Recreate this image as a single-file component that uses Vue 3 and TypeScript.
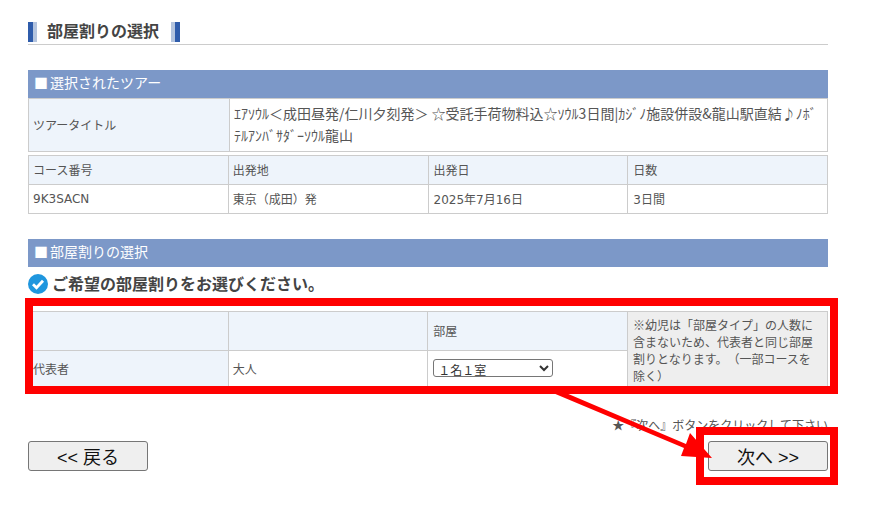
<script setup lang="ts">
const courseHead: string[] = ['コース番号', '出発地', '出発日', '日数']
const courseBody: string[] = ['9K3SACN', '東京\uFF08成田\uFF09発', '2025年7月16日', '3日間']
const note: string = '※幼児は「部屋タイプ」の人数に含まないため、代表者と同じ部屋割りとなります。\uFF08一部コースを除く\uFF09'
const roomOption: string = '\uFF11名\uFF11室'
</script>

<template>
  <div class="page">
    <h2 class="title">
      <span class="bar bar-left"></span>
      <span class="title-text">部屋割りの選択</span>
      <span class="bar bar-right"></span>
    </h2>

    <div class="section first">■<span>選択されたツアー</span></div>
    <table class="tbl tour">
      <tbody>
        <tr>
          <th class="w200">ツアータイトル</th>
          <td class="tour-title">ｴｱｿｳﾙ＜成田昼発/仁川夕刻発＞ ☆受託手荷物料込☆ｿｳﾙ3日間|ｶｼﾞﾉ施設併設&amp;龍山駅直結♪ﾉﾎﾞﾃﾙｱﾝﾊﾞｻﾀﾞｰｿｳﾙ龍山</td>
        </tr>
      </tbody>
    </table>
    <table class="tbl course">
      <tbody>
        <tr><th v-for="h in courseHead" :key="h">{{ h }}</th></tr>
        <tr><td v-for="c in courseBody" :key="c">{{ c }}</td></tr>
      </tbody>
    </table>

    <div class="section second">■<span>部屋割りの選択</span></div>
    <p class="lead">
      <svg class="check" width="20" height="20" viewBox="0 0 20 20">
        <circle cx="10" cy="10" r="10" fill="#1f96de" />
        <path d="M5 10.2l3.5 3.5 6.5-7" fill="none" stroke="#fff" stroke-width="2.8" />
      </svg>
      <span class="lead-text">ご希望の部屋割りをお選びください。</span>
    </p>

    <table class="tbl room">
      <tbody>
        <tr class="room-head">
          <th></th>
          <th></th>
          <th>部屋</th>
          <th class="note" rowspan="2">{{ note }}</th>
        </tr>
        <tr class="room-row">
          <th>代表者</th>
          <td>大人</td>
          <td>
            <select class="room-select">
              <option>{{ roomOption }}</option>
            </select>
          </td>
        </tr>
      </tbody>
    </table>

    <p class="hint">★『次へ』ボタンをクリックして下さい</p>
    <div class="actions">
      <button class="btn" type="button">&lt;&lt; 戻る</button>
      <button class="btn" type="button">次へ &gt;&gt;</button>
    </div>

    <div class="mark mark-table"></div>
    <div class="mark mark-next"></div>
    <svg class="arrow" width="877" height="509" viewBox="0 0 877 509">
      <path d="M553 393 L566 393 L686 444 L690 433 L712 458 L681 456 L684 448 Z" fill="#f00" />
    </svg>
  </div>
</template>

<style>
html, body { margin: 0; background: #fff; }
</style>

<style scoped>
.page {
  position: relative;
  width: 877px;
  height: 509px;
  box-sizing: border-box;
  padding: 22px 49px 0 28px;
  overflow: hidden;
  font-family: "DejaVu Sans", "Noto Sans CJK JP", sans-serif;
  font-size: 12px;
  color: #555;
  text-spacing-trim: space-all;
}
.title {
  display: flex;
  align-items: stretch;
  height: 23px;
  margin: 0;
  box-sizing: border-box;
  border-bottom: 1px solid #ccc;
}
.bar { width: 9px; height: 20px; }
.bar-left { background: linear-gradient(90deg, #2f5cab 0 55%, #b4c4de 55%); }
.bar-right { background: linear-gradient(90deg, #b4c4de 0 40%, #2f5cab 40%); }
.title-text {
  width: 134px;
  padding-left: 10px;
  box-sizing: border-box;
  font-family: "Noto Sans CJK JP", sans-serif;
  font-size: 16px;
  line-height: 17px;
  font-weight: 700;
  color: #444;
  white-space: nowrap;
}
.section {
  height: 28px;
  box-sizing: border-box;
  padding-left: 6px;
  background: #7c98c8;
  color: #fff;
  font-family: "Noto Sans CJK JP", sans-serif;
  font-size: 14px;
  line-height: 25px;
}
.section span { margin-left: 2px; }
.first { margin-top: 25px; }
.second { margin-top: 25px; }
.tbl {
  width: 800px;
  table-layout: fixed;
  border-collapse: collapse;
}
.tbl th, .tbl td {
  box-sizing: border-box;
  border: 1px solid #ccc;
  padding: 0 4px 2px;
  font-weight: 400;
  text-align: left;
  vertical-align: middle;
}
.course th:nth-child(n+3),
.course td:nth-child(n+3),
.room th:nth-child(n+3),
.room td:nth-child(n+3) { padding-left: 5px; }
.course tr:last-child td:first-child { padding-bottom: 0; }
.tbl th { background: #eef4fb; }
.tbl td { background: #fff; }
.w200 { width: 201px; }
.tour tr { height: 53px; }
.tbl .tour-title {
  font-family: "Noto Sans CJK JP", sans-serif;
  font-size: 14px;
  line-height: 22px;
  padding-right: 8px;
}
.course { margin-top: 3px; }
.course tr { height: 29px; }
.lead {
  display: flex;
  align-items: center;
  gap: 4px;
  height: 20px;
  margin: 7px 0 0;
  font-family: "Noto Sans CJK JP", sans-serif;
  font-size: 16px;
  font-weight: 700;
  color: #444;
  white-space: nowrap;
}
.lead-text { line-height: 18px; margin-bottom: 2px; }
.check { flex: none; }
.room { margin-top: 17px; }
.room-head { height: 39px; }
.room-row { height: 38px; }
.tbl .note {
  width: 200px;
  font-family: "Noto Sans CJK JP", sans-serif;
  line-height: 17px;
  background: #eee;
  padding: 0 12px 0 5px;
}
.room-select {
  width: 120px;
  height: 18px;
  padding: 0;
  font-family: "Noto Sans CJK JP", sans-serif;
  font-size: 12px;
  color: #333;
  background: #fff;
  border: 1px solid #767676;
  border-radius: 3px;
}
.hint {
  margin: 27px 0 0;
  height: 17px;
  font-family: "Noto Sans CJK JP", sans-serif;
  line-height: 17px;
  text-align: right;
}
.actions {
  display: flex;
  justify-content: space-between;
  margin-top: 8px;
}
.btn {
  width: 120px;
  height: 30px;
  padding: 0;
  box-sizing: border-box;
  background: #efefef;
  border: 1px solid #767676;
  border-radius: 3px;
  font-family: "Liberation Sans", "Noto Sans CJK JP", sans-serif;
  font-size: 18px;
  color: #111;
}
.mark {
  position: absolute;
  box-sizing: border-box;
  border: 8px solid #f00;
  pointer-events: none;
}
.mark-table { left: 25px; top: 298px; width: 813px; height: 96px; }
.mark-next { left: 696px; top: 427px; width: 142px; height: 58px; }
.arrow { position: absolute; left: 0; top: 0; pointer-events: none; }
</style>
